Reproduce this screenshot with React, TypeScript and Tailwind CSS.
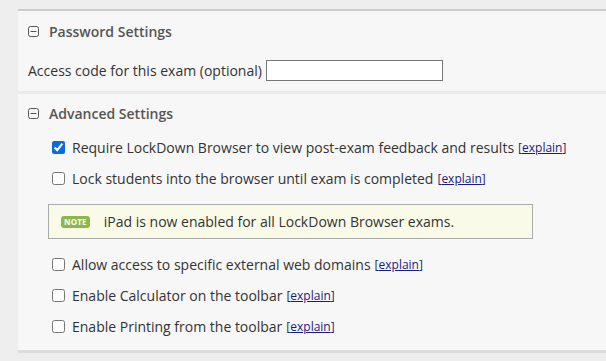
import { useState } from 'react'

function MinusBox() {
  return (
    <svg width="11" height="11" viewBox="0 0 11 11" className="shrink-0">
      <rect x="0.5" y="0.5" width="10" height="10" rx="2" fill="none" stroke="#555" strokeWidth="1" />
      <line x1="2.5" y1="5.5" x2="8.5" y2="5.5" stroke="#555" strokeWidth="1" />
    </svg>
  )
}

function Explain() {
  return (
    <span className="text-[12px] text-[#1f1f6e] ml-1">
      [<a href="#" className="underline text-[#1a1a80]">explain</a>]
    </span>
  )
}

function Row({ label, checked = false, explain = true }: { label: string; checked?: boolean; explain?: boolean }) {
  const [on, setOn] = useState(checked)
  return (
    <label className="flex items-center h-[31px]">
      <input
        type="checkbox"
        checked={on}
        onChange={() => setOn(!on)}
        className="w-[13px] h-[13px] m-0 mr-[7px] accent-[#0b6bde]"
      />
      <span>{label}</span>
      {explain && <Explain />}
    </label>
  )
}

export default function App() {
  return (
    <div
      className="w-[606px] h-[361px] bg-[#eeeeee] pt-[9px] pl-[18px] text-[14px] text-[#333] overflow-hidden"
      style={{ fontFamily: '"Open Sans", Arial, sans-serif' }}
    >
      <div className="bg-[#f7f7f7] border-t-2 border-[#cccccc] h-[82px] pl-[10px]">
        <div className="flex items-center gap-[10px] pt-[10px] text-[#555] font-semibold">
          <MinusBox />
          <span>Password Settings</span>
        </div>
        <div className="flex items-center mt-[18px]">
          <span>Access code for this exam (optional)</span>
          <input type="text" className="ml-[4px] w-[177px] h-[21px] bg-white border border-[#767676]" />
        </div>
      </div>
      <div className="h-[3px] bg-[#ebebeb]" />
      <div className="bg-[#f7f7f7] h-[259px] border-b-[3px] border-[#dddddd] pl-[10px]">
        <div className="flex items-center gap-[10px] pt-[9px] text-[#555] font-semibold">
          <MinusBox />
          <span>Advanced Settings</span>
        </div>
        <div className="pl-[24px] mt-[8px]">
          <Row label="Require LockDown Browser to view post-exam feedback and results" checked />
          <Row label="Lock students into the browser until exam is completed" />
          <div className="mt-[10px] mb-[10px] -ml-[4px] w-[485px] h-[35px] bg-[#fafae9] border border-[#aaaaaa] flex items-center pl-[12px]">
            <span className="bg-[#8cb84a] text-white text-[8px] font-bold leading-none rounded-[3px] px-[3px] py-[2px] tracking-wide">NOTE</span>
            <span className="ml-[14px]">iPad is now enabled for all LockDown Browser exams.</span>
          </div>
          <Row label="Allow access to specific external web domains" />
          <Row label="Enable Calculator on the toolbar" />
          <Row label="Enable Printing from the toolbar" />
        </div>
      </div>
    </div>
  )
}
